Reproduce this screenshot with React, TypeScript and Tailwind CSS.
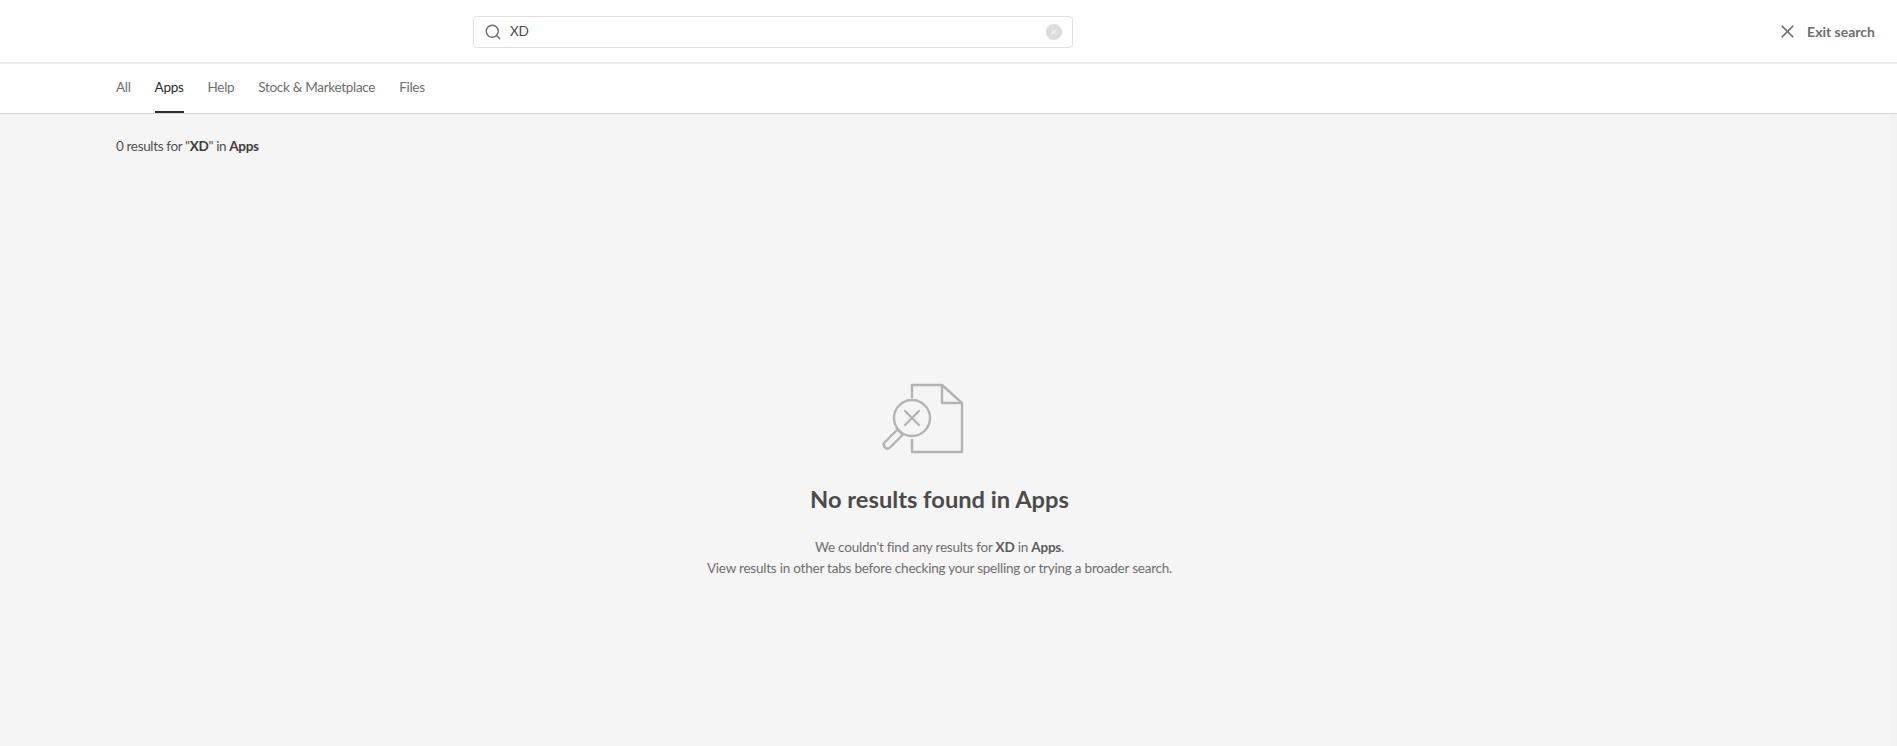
import { Search, X } from 'lucide-react';

const tabs = ['All', 'Apps', 'Help', 'Stock & Marketplace', 'Files'];

function NoResultsIcon() {
  return (
    <svg width="90" height="80" viewBox="0 0 90 80" fill="none" stroke="#b3b3b3" strokeWidth="2.4" className="mr-[29px]">
      <path d="M32 17V5H62L82 23V72H32V60" strokeLinejoin="round" strokeLinecap="round" />
      <path d="M62 5V23H82" strokeLinejoin="round" />
      <circle cx="32" cy="38" r="18" />
      <path d="M25 31L39 45M39 31L25 45" strokeLinecap="round" />
      <path d="M19 51L17.5 49.5L5 62C3 64 3.5 66 5 67.5C6.500 69 8.500 69 10.500 67L23 54.500Z" strokeLinejoin="round" />
    </svg>
  );
}

export default function App() {
  return (
    <div className="flex h-[746px] flex-col overflow-hidden bg-[#f5f5f5] font-['Lato',sans-serif] text-[13.5px] tracking-[-0.22px] text-[#505050]">
      <header className="relative flex h-[64px] shrink-0 items-start border-b-2 border-[#eaeaea] bg-white pl-[473px] pt-4">
        <div className="flex h-8 w-[600px] items-center rounded-[4px] border border-[#e1e1e1] bg-white pl-[10px] pr-[10px]">
          <Search size={18} strokeWidth={1.9} className="text-[#6e6e6e]" />
          <span className="ml-[8px] mb-[2px] grow text-[#4b4b4b]">XD</span>
          <span className="flex h-4 w-4 items-center justify-center rounded-full bg-[#dcdcdc]">
            <X size={10} strokeWidth={2.5} className="text-[#f5f5f5]" />
          </span>
        </div>
        <button className="absolute right-[22px] top-[21px] flex items-center gap-[9px] text-[14px] font-bold tracking-normal text-[#6e6e6e]">
          <X size={21} strokeWidth={2} />
          Exit search
        </button>
      </header>

      <nav className="flex h-[50px] shrink-0 items-stretch gap-6 border-b border-[#d5d5d5] bg-white pl-[116px] tracking-[-0.3px]">
        {tabs.map((tab) => (
          <div
            key={tab}
            className={`flex items-center border-b-2 ${tab === 'Apps' ? 'border-[#2c2c2c] text-[#2c2c2c]' : 'border-transparent text-[#6e6e6e]'}`}
          >
            {tab}
          </div>
        ))}
      </nav>

      <main className="flex grow flex-col border-r-[7px] border-[#f2f2f2] pl-[116px] pr-[127px]">
        <p className="mt-[22px] leading-5 tracking-[-0.35px] text-[#505050]">
          0 results for "<strong className="text-[#3c3c3c]">XD</strong>" in <strong className="text-[#3c3c3c]">Apps</strong>
        </p>
        <div className="mt-[224px] flex flex-col items-center">
          <NoResultsIcon />
          <h2 className="mt-[24px] text-[23.7px] font-bold leading-[30px] tracking-normal text-[#4b4b4b]">No results found in Apps</h2>
          <p className="mt-[23px] text-center leading-[21px] text-[#6e6e6e]">
            We couldn't find any results for <strong className="text-[#5a5a5a]">XD</strong> in <strong className="text-[#5a5a5a]">Apps</strong>.
            <br />
            View results in other tabs before checking your spelling or trying a broader search.
          </p>
        </div>
      </main>
    </div>
  );
}
